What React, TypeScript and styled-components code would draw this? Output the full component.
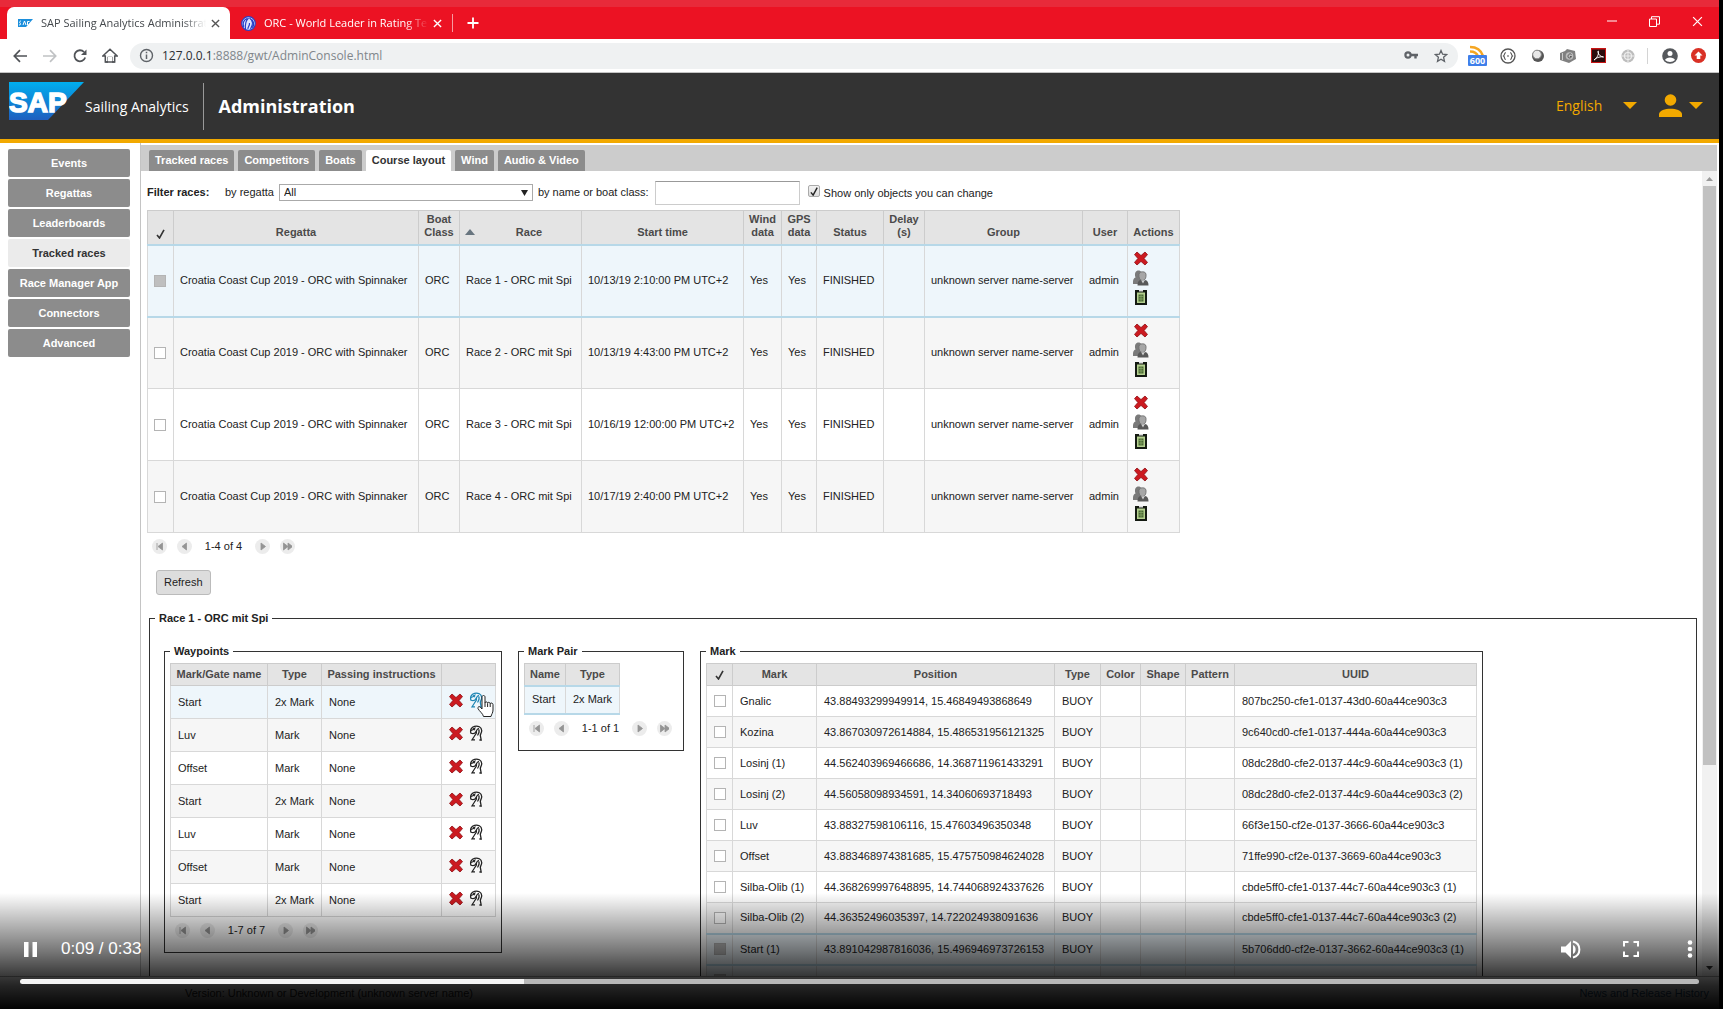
import React from "react";
import styled, { createGlobalStyle, css } from "styled-components";

const SANS = `"Liberation Sans", Arial, sans-serif`;
const UI = `"Open Sans", "Noto Sans", sans-serif`;

const GlobalStyle = createGlobalStyle`
  * { box-sizing: border-box; }
  body { margin: 0; background: #000; overflow: hidden; }
  button, input, select { font: inherit; color: inherit; margin: 0; }
  button { border: 0; padding: 0; background: none; cursor: pointer; }
  svg { display: block; flex: none; }
`;

const Screen = styled.div`
  position: relative;
  display: flex;
  flex-direction: column;
  height: 100vh;
  padding-right: 4px;
  background: #000;
  color: #222;
  font: 11px/13px ${SANS};
`;

/* ---------- browser window ---------- */

const TabStrip = styled.div`
  display: flex;
  height: 39px;
  padding-left: 7px;
  background: #ec1223;
  border-top: 7px solid #e82a3a;
  font: 11px/16px ${UI};
`;

const BrowserTab = styled.div<{ $active?: boolean }>`
  display: flex;
  align-items: center;
  width: ${(p) => (p.$active ? 223 : 222)}px;
  padding: 0 10px 0 11px;
  border-radius: 7px 7px 0 0;
  color: ${(p) => (p.$active ? "#45494d" : "#fff")};
  background: ${(p) => (p.$active ? "#fff" : "transparent")};
`;

const TabTitle = styled.span`
  flex: 1;
  min-width: 0;
  margin: 0 2px 0 8px;
  white-space: nowrap;
  mask-image: linear-gradient(90deg, #000 85%, transparent 99%);
`;

const TabDivider = styled.span`
  width: 1px;
  height: 18px;
  margin: 7px 14px 0 0;
  background: #f79aa0;
`;

const IconButton = styled.button<{ $w?: number }>`
  display: flex;
  align-items: center;
  justify-content: center;
  flex: none;
  width: ${(p) => p.$w ?? 30}px;
`;

const WindowButtons = styled.div`
  display: flex;
  margin-left: auto;
  padding-bottom: 4px;
`;

const Toolbar = styled.div`
  display: flex;
  align-items: center;
  height: 34px;
  padding: 0 6px 0 5px;
  background: #fff;
  border-bottom: 1px solid #c4c4c4;
`;

const AddressBar = styled.div`
  display: flex;
  flex: 1;
  align-items: center;
  height: 26px;
  margin: 0 5px;
  padding: 0 2px 0 9px;
  border-radius: 13px;
  background: #eff1f2;
  color: #80868b;
  font: 12px/18px ${UI};
  white-space: nowrap;
`;

const Url = styled.span`
  flex: 1;
  padding-left: 8px;
  b { font-weight: 400; color: #2b2f33; }
`;

const ToolbarDivider = styled.span`
  width: 1px;
  height: 16px;
  margin: 0 7px 0 4px;
  background: #d4d4d4;
`;

/* ---------- application header ---------- */

const AppHeader = styled.header`
  display: flex;
  align-items: center;
  flex: none;
  height: 70px;
  padding: 0 16px 0 9px;
  background: #333;
  border-bottom: 4px solid #f2a900;
  color: #fff;
  font: 14px/20px ${UI};
`;

const LogoImage = styled.svg`
  align-self: flex-start;
  margin-top: 9px;
`;

const Brand = styled.span`
  padding: 2px 14px 0 1px;
`;

const Title = styled.h1`
  margin: 0;
  padding: 0 0 0 15px;
  border-left: 1px solid #999;
  font-size: 18px;
  line-height: 47px;
  font-weight: 700;
`;

const HeaderTools = styled.div`
  display: flex;
  align-items: center;
  margin-left: auto;
  color: #f2a900;
`;

const Language = styled.label`
  display: flex;
  align-items: center;
  margin-right: 22px;
  select {
    width: 67px;
    padding: 0;
    border: 0;
    appearance: none;
    background: none;
  }
`;

const UserButton = styled.button`
  display: flex;
  align-items: center;
  gap: 7px;
`;

/* ---------- page body ---------- */

const Page = styled.div`
  display: flex;
  flex: 1;
  min-height: 0;
  background: #fff;
`;

const SideNav = styled.nav`
  display: flex;
  flex-direction: column;
  flex: none;
  gap: 2px;
  width: 141px;
  padding: 6px 10px 0 8px;
  border-right: 1px solid #c4c4c4;
`;

const SideItem = styled.button<{ $active?: boolean }>`
  height: 28px;
  border-radius: 2px;
  font-weight: 700;
  color: ${(p) => (p.$active ? "#333" : "#fff")};
  background: ${(p) => (p.$active ? "#ebebeb" : "#8c8c8c")};
`;

const Main = styled.main`
  display: flex;
  flex-direction: column;
  flex: 1;
  min-width: 0;
  padding: 2px 2px 0 0;
`;

const Tabs = styled.div`
  display: flex;
  align-items: flex-end;
  flex: none;
  gap: 4px;
  height: 26px;
  padding-left: 8px;
  background: #ccc;
`;

const Tab = styled.button<{ $active?: boolean }>`
  height: 21px;
  padding: 0 6px;
  border-radius: 2px 2px 0 0;
  font-weight: 700;
  white-space: nowrap;
  color: ${(p) => (p.$active ? "#333" : "#fff")};
  background: ${(p) => (p.$active ? "#fff" : "#8c8c8c")};
`;

const ScrollArea = styled.div`
  display: flex;
  flex: 1;
  min-height: 0;
`;

const Panel = styled.div`
  flex: 1;
  min-width: 0;
  padding: 0 5px 0 6px;
  overflow: hidden;
`;

const ScrollTrack = styled.div`
  display: flex;
  flex-direction: column;
  align-items: center;
  width: 15px;
  padding: 6px 0;
  background: #f1f1f1;
`;

const ScrollThumb = styled.div`
  width: 13px;
  height: 73%;
  margin: 5px 0 auto;
  background: #c1c1c1;
`;

const Filters = styled.form`
  display: flex;
  align-items: center;
  height: 39px;
  padding-top: 4px;
  white-space: nowrap;
`;

const FilterTitle = styled.strong`
  width: 78px;
`;

const RegattaSelect = styled.div`
  position: relative;
  width: 254px;
  margin: 0 5px;
  select {
    display: block;
    width: 100%;
    height: 17px;
    padding: 0 4px;
    border: 1px solid #aaa;
    border-radius: 0;
    appearance: none;
    background: #fff;
  }
  svg { position: absolute; right: 5px; top: 6px; pointer-events: none; }
`;

const NameInput = styled.input`
  width: 145px;
  height: 24px;
  margin: 0 8px 0 6px;
  border: 1px solid #ccc;
  border-top-color: #999;
`;

const TickLabel = styled.label`
  display: flex;
  align-items: flex-end;
  gap: 4px;
`;

const TickBox = styled.span`
  position: relative;
  display: flex;
  padding-bottom: 3px;
  input {
    width: 12px;
    height: 12px;
    appearance: none;
    border: 1px solid #aaa;
    border-radius: 2px;
    background: linear-gradient(#f2f2f2, #ddd);
  }
  svg { position: absolute; left: 2px; top: 2px; pointer-events: none; }
`;

/* ---------- tables ---------- */

const Grid = styled.table<{ $row: number; $head: number; $pad?: number }>`
  width: min-content;
  border-collapse: collapse;
  table-layout: fixed;
  white-space: nowrap;

  th {
    height: ${(p) => p.$head}px;
    padding: 0 2px;
    border: 1px solid #ccc;
    background: #e4e4e4;
    color: #4b4a4a;
    font-weight: 700;
    text-align: center;
  }
  th > svg { margin: 0 auto; }
  td {
    height: ${(p) => p.$row}px;
    padding: 0 0 0 ${(p) => p.$pad ?? 7}px;
    border: 1px solid #d8d8d8;
  }
`;

const RacesGrid = styled(Grid)`
  th {
    padding-bottom: 5px;
    vertical-align: bottom;
    white-space: pre-line;
  }
`;

const Row = styled.tr<{ $tone: "plain" | "even" | "selected" | "hover" }>`
  background: ${(p) => ({ plain: "#fff", even: "#f6f6f6", selected: "#eef6fb", hover: "#eef6fb" })[p.$tone]};
  ${(p) =>
    p.$tone === "selected" &&
    css`
      td { border-top: 2px solid #b7d8e8; border-bottom: 2px solid #b7d8e8; }
    `}
`;

const Check = styled.input<{ $pressed?: boolean }>`
  display: block;
  width: 12px;
  height: 12px;
  appearance: none;
  border: 1px solid #b4b4b4;
  background: ${(p) => (p.$pressed ? "#bfbfbf" : "#fff")};
`;

const SortHead = styled.span`
  display: grid;
  grid-template-columns: 14px 1fr;
  align-items: center;
  padding-left: 3px;
`;

const ActionStack = styled.div`
  display: flex;
  flex-direction: column;
  gap: 4px;
  padding-bottom: 6px;
`;

const ActionLine = styled.div`
  position: relative;
  display: flex;
  gap: 4px;
  padding-bottom: 4px;
`;

const Pointer = styled.svg`
  position: absolute;
  left: 28px;
  top: 2px;
`;

const PagerBar = styled.div`
  display: flex;
  align-items: center;
  gap: 10px;
  padding: 6px 6px 0 5px;
  span { width: 43px; text-align: center; white-space: nowrap; }
`;

const PagerButton = styled.button`
  display: flex;
  align-items: center;
  justify-content: center;
  width: 15px;
  height: 15px;
  border-radius: 8px;
  background: #ececec;
`;

const Refresh = styled.button`
  display: block;
  height: 25px;
  margin: 16px 9px;
  padding: 0 7px;
  border: 1px solid #bbb;
  border-radius: 3px;
  background: #ddd;
`;

const Group = styled.fieldset`
  flex: none;
  min-width: 0;
  margin: 0;
  padding: 5px 5px 14px;
  border: 1px solid #333;
`;

const RaceGroup = styled(Group)`
  margin-left: 2px;
  padding-top: 19px;
`;

const Legend = styled.legend`
  height: 14px;
  padding: 0 4px;
  line-height: 14px;
  font-weight: 700;
`;

const Groups = styled.div`
  display: flex;
  align-items: flex-start;
  gap: 16px;
  padding-left: 9px;
`;

const Footer = styled.footer`
  display: flex;
  justify-content: space-between;
  flex: none;
  height: 33px;
  padding: 9px 10px 0 185px;
  background: #fff;
  border-top: 1px solid #aaa;
  line-height: 14px;
  a { color: #1a4f7a; text-decoration: none; }
`;

/* ---------- video controls ---------- */

const Controls = styled.div`
  position: absolute;
  inset: auto 4px 0 0;
  display: flex;
  flex-direction: column;
  justify-content: flex-end;
  height: 116px;
  padding-bottom: 25px;
  color: #fff;
  background: linear-gradient(
    rgba(0, 0, 0, 0) 0%, rgba(0, 0, 0, 0.28) 26%, rgba(0, 0, 0, 0.54) 51%,
    rgba(0, 0, 0, 0.76) 70%, rgba(0, 0, 0, 0.86) 80%, rgba(0, 0, 0, 0.99) 100%
  );
`;

const ControlRow = styled.div`
  display: flex;
  align-items: center;
  height: 30px;
  margin-bottom: 15px;
  padding-left: 19px;
  font: 17px/20px ${SANS};
`;

const TimeText = styled.span`
  margin: 0 auto 0 20px;
`;

const SeekRow = styled.div`
  display: flex;
  padding: 0 20px;
`;

const Seek = styled.input<{ $played: number }>`
  display: block;
  width: 100%;
  height: 5px;
  border-radius: 3px;
  appearance: none;
  background: linear-gradient(90deg, #f4f4f4 ${(p) => p.$played}%, #b8b8b8 ${(p) => p.$played}%);
  &::-webkit-slider-thumb { appearance: none; width: 0; height: 0; }
`;

/* ---------- drawings ---------- */

const stroke = (color: string, width = 1.5) => ({ fill: "none", stroke: color, strokeWidth: width });

const SapMini = () => (
  <svg width="15" height="8" viewBox="0 0 15 8">
    <path d="M0 0h15l-7 8H0z" fill="#1c8fdc" />
    <path d="M1 6c2 0 2-1 1-2s0-2 1-2M5 6l1.500-4L8 6M9.500 6V2.500h2" {...stroke("#fff", 1)} />
  </svg>
);

const OrcMini = () => (
  <svg width="15" height="15" viewBox="0 0 15 15">
    <circle cx="7.500" cy="7.500" r="6.800" fill="#dfe4ff" stroke="#2740c8" strokeWidth="1.200" />
    <path d="M2.500 11C1.500 7 3 4 6 2.500M4.500 13C4 9 4.500 5 7.500 2M7 13c-.5-2 2-3 1.500-6M8.500 2c3 2 4 6 1 11M11 3.500c2 3 2 6 .5 8.500" {...stroke("#2740c8", 1.200)} />
  </svg>
);

const Cross = ({ color, size = 9, w = 1.5 }: { color: string; size?: number; w?: number }) => (
  <svg width={size} height={size} viewBox="0 0 10 10"><path d="M1 1l8 8M9 1l-8 8" {...stroke(color, w)} /></svg>
);

const SapLogo = () => (
  <LogoImage width="75" height="38" viewBox="0 0 75 38" role="img" aria-label="SAP">
    <defs>
      <linearGradient id="sap" x1="0" y1="0" x2="0" y2="1">
        <stop offset="0" stopColor="#00aeef" /><stop offset="1" stopColor="#1e5fbf" />
      </linearGradient>
    </defs>
    <path d="M0 0h75L39 38H0z" fill="url(#sap)" />
    <text x="0" y="30" fill="#fff" stroke="#fff" strokeWidth="1.500" fontFamily="Liberation Sans, Arial, sans-serif" fontSize="28" fontWeight="700">SAP</text>
  </LogoImage>
);

const Caret = () => <svg width="14" height="8" viewBox="0 0 14 8"><path d="M0 0h14L7 7z" fill="#f2a900" /></svg>;

const DeleteIcon = () => (
  <svg width="14" height="15" viewBox="0 0 14 15">
    <path d="M3 1l4 3.600L11 1l2.500 2.600-3.400 3.900 3.400 3.900L11 14l-4-3.600L3 14 .5 11.400l3.400-3.900L.5 3.600z" fill="#cc1a20" stroke="#8e0f14" strokeWidth=".8" strokeLinejoin="round" />
  </svg>
);

const OwnersIcon = () => (
  <svg width="16" height="16" viewBox="0 0 16 16">
    <path d="M0 13c0-4 1-5 2.500-5.500C1 3 3 .5 5.500.5S9.500 3 9 6l-1 8H0z" fill="#7a7a7a" />
    <path d="M6 6.500C5.500 3 7 1.800 9.500 1.800S13.500 3 13 6.500c-.3 2.500-1.500 4-3.500 4S6.300 9 6 6.500z" fill="#a6a6a6" stroke="#6a6a6a" strokeWidth=".8" />
    <path d="M4.500 15.500c0-3.500 1-5 3-5.500l2.500 2.500L12 10c2.500.5 3.500 2 3.500 5.500z" fill="#585858" />
    <path d="M8.500 10.500l1.500 3 1.500-3z" fill="#ccc" />
  </svg>
);

const ClipboardIcon = () => (
  <svg width="12" height="15" viewBox="0 0 12 15">
    <path d="M0 0h12v15H0z" fill="#141a12" /><path d="M2 2.500h8V13H2z" fill="#b4d08f" />
    <path d="M3.500 4.500h5v7h-5z" fill="#4c6b35" /><path d="M3.500 6.500h5M3.500 9h5M6 4.500v7" {...stroke("#94b374", 0.6)} />
    <path d="M4 0h4v1.500H4z" fill="#ddd" />
  </svg>
);

const OrcIcon = ({ color = "#222" }: { color?: string }) => (
  <svg width="14" height="16" viewBox="0 0 14 16">
    <path d="M2 8.500C.8 5 2.500 2 5.500 1.300 9 .5 12.500 2 12.700 5.500c.1 2-1.200 3-1.400 5l.9 4.500h-1.800" {...stroke(color, 1.300)} />
    <path d="M2 5.500c2-.3 3.500-1.500 4.500-3M2 8.200c2 .8 4 .2 5-1.800s1.500-2.800 3-3M7.500 6.500c.5 2-1 3-2 4.500L3 14.800h3M9.800 4.500c.8 2 .2 4-1.300 6M4 3.500l2 1.500" {...stroke(color, 1.200)} />
  </svg>
);

const CheckMark = ({ color = "#333", size = 10 }: { color?: string; size?: number }) => (
  <svg width={size} height={size} viewBox="0 0 10 10"><path d="M1 6l2.500 3L8 .8" {...stroke(color, 1.600)} /></svg>
);

/* ---------- shared parts ---------- */

const pagerShapes = {
  "First page": "M2 1v7M7.500 1L3 4.500 7.500 8z",
  "Previous page": "M6.500 1L2 4.500 6.500 8z",
  "Next page": "M3 1l4.500 3.500L3 8z",
  "Fast forward": "M0.500 1L5 4.500 0.500 8zM5 1l4.500 3.500L5 8z",
};

const PageStep = ({ name }: { name: keyof typeof pagerShapes }) => (
  <PagerButton type="button" aria-label={name}>
    <svg width="9" height="9" viewBox="0 0 9 9"><path d={pagerShapes[name]} fill="#949494" stroke="#949494" strokeWidth=".8" /></svg>
  </PagerButton>
);

const Pager = ({ text }: { text: string }) => (
  <PagerBar>
    <PageStep name="First page" />
    <PageStep name="Previous page" />
    <span>{text}</span>
    <PageStep name="Next page" />
    <PageStep name="Fast forward" />
  </PagerBar>
);

const Cols = ({ widths }: { widths: number[] }) => (
  <colgroup>{widths.map((w, i) => <col key={i} width={w} />)}</colgroup>
);

/* ---------- data ---------- */

const sections = ["Events", "Regattas", "Leaderboards", "Tracked races", "Race Manager App", "Connectors", "Advanced"];
const tabs = ["Tracked races", "Competitors", "Boats", "Course layout", "Wind", "Audio & Video"];
const races = [
  ["Race 1 - ORC mit Spi", "10/13/19 2:10:00 PM UTC+2"],
  ["Race 2 - ORC mit Spi", "10/13/19 4:43:00 PM UTC+2"],
  ["Race 3 - ORC mit Spi", "10/16/19 12:00:00 PM UTC+2"],
  ["Race 4 - ORC mit Spi", "10/17/19 2:40:00 PM UTC+2"],
];
const waypoints = [
  ["Start", "2x Mark"], ["Luv", "Mark"], ["Offset", "Mark"], ["Start", "2x Mark"],
  ["Luv", "Mark"], ["Offset", "Mark"], ["Start", "2x Mark"],
];
const marks = [
  ["Gnalic", "43.88493299949914, 15.46849493868649", "807bc250-cfe1-0137-43d0-60a44ce903c3"],
  ["Kozina", "43.867030972614884, 15.486531956121325", "9c640cd0-cfe1-0137-444a-60a44ce903c3"],
  ["Losinj (1)", "44.562403969466686, 14.368711961433291", "08dc28d0-cfe2-0137-44c9-60a44ce903c3 (1)"],
  ["Losinj (2)", "44.56058098934591, 14.34060693718493", "08dc28d0-cfe2-0137-44c9-60a44ce903c3 (2)"],
  ["Luv", "43.88327598106116, 15.47603496350348", "66f3e150-cf2e-0137-3666-60a44ce903c3"],
  ["Offset", "43.883468974381685, 15.475750984624028", "71ffe990-cf2e-0137-3669-60a44ce903c3"],
  ["Silba-Olib (1)", "44.368269997648895, 14.744068924337626", "cbde5ff0-cfe1-0137-44c7-60a44ce903c3 (1)"],
  ["Silba-Olib (2)", "44.36352496035397, 14.722024938091636", "cbde5ff0-cfe1-0137-44c7-60a44ce903c3 (2)"],
  ["Start (1)", "43.891042987816036, 15.496946973726153", "5b706dd0-cf2e-0137-3662-60a44ce903c3 (1)"],
  ["Start (2)", "43.89677388938183, 15.492682831844728", "5b706dd0-cf2e-0137-3662-60a44ce903c3 (2)"],
];

/* ---------- sections ---------- */

const BrowserChrome = () => (
  <>
    <TabStrip>
      <BrowserTab $active>
        <SapMini />
        <TabTitle>SAP Sailing Analytics Administrat</TabTitle>
        <IconButton $w={10} aria-label="Close tab"><Cross color="#555" /></IconButton>
      </BrowserTab>
      <BrowserTab>
        <OrcMini />
        <TabTitle>ORC - World Leader in Rating Tec</TabTitle>
        <IconButton $w={10} aria-label="Close tab"><Cross color="#fff" /></IconButton>
      </BrowserTab>
      <TabDivider />
      <IconButton $w={12} aria-label="New tab">
        <svg width="12" height="12" viewBox="0 0 12 12"><path d="M6 .5v11M.5 6h11" {...stroke("#fff", 1.8)} /></svg>
      </IconButton>
      <WindowButtons>
        <IconButton $w={43} aria-label="Minimise"><svg width="10" height="2"><path d="M0 1h10" {...stroke("#fff", 1)} /></svg></IconButton>
        <IconButton $w={43} aria-label="Restore"><svg width="11" height="11" viewBox="0 0 11 11"><path d="M.5 3h7v7.500h-7zM2.500 3V.7h8v7.500h-3" {...stroke("#fff", 1)} /></svg></IconButton>
        <IconButton $w={43} aria-label="Close"><Cross color="#fff" size={11} w={1.1} /></IconButton>
      </WindowButtons>
    </TabStrip>
    <Toolbar>
      <IconButton aria-label="Back"><svg width="14" height="14" viewBox="0 0 14 14"><path d="M14 7H1.500M7 1.200L1.300 7 7 12.800" {...stroke("#505357", 1.7)} /></svg></IconButton>
      <IconButton aria-label="Forward"><svg width="14" height="14" viewBox="0 0 14 14"><path d="M0 7h12.500M7 1.200L12.700 7 7 12.800" {...stroke("#c0c2c4", 1.7)} /></svg></IconButton>
      <IconButton aria-label="Reload"><svg width="14" height="14" viewBox="0 0 14 14"><path d="M12.200 8.500A5.500 5.500 0 1 1 11 3" {...stroke("#505357", 1.8)} /><path d="M13.500.5v5.500H8z" fill="#505357" /></svg></IconButton>
      <IconButton aria-label="Home"><svg width="16" height="15" viewBox="0 0 16 15"><path d="M.8 8L8 1.200 15.200 8h-2.500v6H9.800V9.500H6.200V14H3.300V8z" {...stroke("#505357", 1.500)} /><path d="M6 9h4v6H6z" fill="#fff" /><path d="M3.300 14h9.400" {...stroke("#505357", 1.500)} /></svg></IconButton>
      <AddressBar>
        <svg width="15" height="15" viewBox="0 0 15 15"><circle cx="7.500" cy="7.500" r="6" {...stroke("#5f6368", 1.4)} /><path d="M7.500 6.500V11M7.500 3.800v1.500" {...stroke("#5f6368", 1.5)} /></svg>
        <Url><b>127.0.0.1</b>:8888/gwt/AdminConsole.html</Url>
        <IconButton aria-label="Saved passwords"><svg width="14" height="9" viewBox="0 0 14 9"><circle cx="4" cy="4" r="2.600" {...stroke("#5f6368", 2.2)} /><path d="M6.500 4H14M11.500 4v3.500" {...stroke("#5f6368", 2.4)} /></svg></IconButton>
        <IconButton aria-label="Bookmark"><svg width="14" height="14" viewBox="0 0 14 14"><path d="M7 1.500l1.600 3.700 4 .4-3 2.700.9 4L7 10.200l-3.500 2.100.9-4-3-2.700 4-.4z" {...stroke("#5f6368", 1.3)} /></svg></IconButton>
      </AddressBar>
      <IconButton aria-label="Feeds">
        <svg width="20" height="22" viewBox="0 0 20 22">
          <path d="M2 2c6 0 11 3 13 9M2 6.500c4 0 7 2 8 5" {...stroke("#f5a623", 2.6)} />
          <rect y="10" width="19" height="11" rx="1" fill="#3f7fea" />
          <text x="9.500" y="19" textAnchor="middle" fill="#fff" fontSize="9" fontWeight="700" fontFamily="Open Sans, sans-serif">600</text>
        </svg>
      </IconButton>
      <IconButton aria-label="Script tools"><svg width="16" height="16" viewBox="0 0 16 16"><circle cx="8" cy="8" r="7" {...stroke("#555", 1.3)} /><path d="M5.800 4.500C4 5 5 7 3.500 8 5 9 4 11 5.800 11.500M10.200 4.500C12 5 11 7 12.500 8 11 9 12 11 10.200 11.500M7 8h2" {...stroke("#555", 1.1)} /></svg></IconButton>
      <IconButton aria-label="Lens"><svg width="14" height="14" viewBox="0 0 14 14"><circle cx="7" cy="7" r="6" fill="#555" /><circle cx="6" cy="5.500" r="4.300" fill="#e8e8e8" stroke="#888" /></svg></IconButton>
      <IconButton aria-label="Capture"><svg width="16" height="14" viewBox="0 0 16 14"><path d="M0 4l5-2 2-2 4 1 4 1 1 8-7 4-9-3z" fill="#808080" /><circle cx="9.500" cy="7" r="3.800" fill="#bbb" /><path d="M11.500 5.500C10 4 8 5.500 8 7.500s3 2 3.500 0H10" {...stroke("#555", 1)} /><path d="M2.500 4v7" {...stroke("#ccc", 1)} /></svg></IconButton>
      <IconButton aria-label="PDF"><svg width="15" height="15" viewBox="0 0 15 15"><rect width="15" height="15" fill="#c81414" /><rect x="1" y="1.500" width="13" height="12.500" fill="#2a0c0c" /><path d="M3 12c2-1 5-5 4.500-8.500 0-1-1-.5-.5 1 .5 2 2 4 5.500 4.500C10 8.500 6 9 3 12z" {...stroke("#fff", 1)} /></svg></IconButton>
      <IconButton aria-label="Target"><svg width="14" height="14" viewBox="0 0 14 14"><circle cx="7" cy="7" r="6.500" fill="#bdbdbd" /><circle cx="7" cy="7" r="3.500" {...stroke("#eee", 1.2)} /><path d="M7 1v12M1 7h12" {...stroke("#eee", 1)} /></svg></IconButton>
      <ToolbarDivider />
      <IconButton $w={29} aria-label="Profile"><svg width="16" height="16" viewBox="0 0 16 16"><circle cx="8" cy="8" r="7.800" fill="#55585c" /><circle cx="8" cy="5.500" r="2.500" fill="#fff" /><path d="M3 12c1-3.500 9-3.500 10 0-2.500 2.500-7.500 2.500-10 0z" fill="#fff" /></svg></IconButton>
      <IconButton $w={29} aria-label="Update"><svg width="15" height="15" viewBox="0 0 15 15"><circle cx="7.500" cy="7.500" r="7.500" fill="#d93025" /><path d="M7.500 3.500l4 4H9.300V11H5.700V7.500H3.500z" fill="#fff" /></svg></IconButton>
    </Toolbar>
  </>
);

const RacesTable = () => (
  <RacesGrid $row={72} $head={34} $pad={6}>
    <Cols widths={[26, 245, 41, 122, 162, 38, 35, 67, 41, 158, 45, 52]} />
    <thead>
      <tr>
        <th aria-label="Select"><CheckMark /></th>
        <th>Regatta</th>
        <th>{"Boat\nClass"}</th>
        <th>
          <SortHead>
            <svg width="10" height="6" viewBox="0 0 10 6"><path d="M5 0l5 6H0z" fill="#68757f" /></svg>
            Race
          </SortHead>
        </th>
        <th>Start time</th>
        <th>{"Wind\ndata"}</th>
        <th>{"GPS\ndata"}</th>
        <th>Status</th>
        <th>{"Delay\n(s)"}</th>
        <th>Group</th>
        <th>User</th>
        <th>Actions</th>
      </tr>
    </thead>
    <tbody>
      {races.map(([race, time], i) => (
        <Row key={race} $tone={i === 0 ? "selected" : i % 2 ? "even" : "plain"}>
          <td><Check type="checkbox" aria-label={race} $pressed={i === 0} /></td>
          <td>Croatia Coast Cup 2019 - ORC with Spinnaker</td>
          <td>ORC</td>
          <td>{race}</td>
          <td>{time}</td>
          <td>Yes</td>
          <td>Yes</td>
          <td>FINISHED</td>
          <td />
          <td>unknown server name-server</td>
          <td>admin</td>
          <td>
            <ActionStack>
              <IconButton $w={14} aria-label="Remove"><DeleteIcon /></IconButton>
              <IconButton $w={14} aria-label="Ownership"><OwnersIcon /></IconButton>
              <IconButton $w={14} aria-label="Access list"><ClipboardIcon /></IconButton>
            </ActionStack>
          </td>
        </Row>
      ))}
    </tbody>
  </RacesGrid>
);

const WaypointsGroup = () => (
  <Group>
    <Legend>Waypoints</Legend>
    <Grid $row={33} $head={22}>
      <Cols widths={[97, 54, 120, 54]} />
      <thead>
        <tr><th>Mark/Gate name</th><th>Type</th><th>Passing instructions</th><th aria-label="Actions" /></tr>
      </thead>
      <tbody>
        {waypoints.map(([name, type], i) => (
          <Row key={i} $tone={i === 0 ? "hover" : i % 2 ? "even" : "plain"}>
            <td>{name}</td>
            <td>{type}</td>
            <td>None</td>
            <td>
              <ActionLine>
                <IconButton $w={14} aria-label="Remove"><DeleteIcon /></IconButton>
                <IconButton $w={17} aria-label="Fixed mark passing"><OrcIcon color={i === 0 ? "#1f86b4" : "#222"} /></IconButton>
                {i === 0 && (
                  <Pointer width="17" height="24" viewBox="0 0 17 24">
                    <path d="M5 15V3c0-2 3-2 3 0v6c0-1.500 2.600-1.500 2.600.3 0-1.500 2.600-1.200 2.600.5 0-1.300 2.800-1 2.800.8V16c0 3-1.500 4-2 6.500H6.500C6 19.500 2 17 1 14.500c-.6-1.800 1.500-2.500 2.600-1z" fill="#fff" stroke="#222" />
                    <path d="M8 9v4M10.600 9.500V13M13.200 10v3" {...stroke("#222", 1)} />
                  </Pointer>
                )}
              </ActionLine>
            </td>
          </Row>
        ))}
      </tbody>
    </Grid>
    <Pager text="1-7 of 7" />
  </Group>
);

const MarkPairGroup = () => (
  <Group>
    <Legend>Mark Pair</Legend>
    <Grid $row={28} $head={22}>
      <Cols widths={[41, 54]} />
      <thead><tr><th>Name</th><th>Type</th></tr></thead>
      <tbody><Row $tone="selected"><td>Start</td><td>2x Mark</td></Row></tbody>
    </Grid>
    <Pager text="1-1 of 1" />
  </Group>
);

const MarkGroup = () => (
  <Group>
    <Legend>Mark</Legend>
    <Grid $row={31} $head={22}>
      <Cols widths={[26, 84, 238, 46, 40, 45, 49, 242]} />
      <thead>
        <tr>
          <th aria-label="Select"><CheckMark /></th>
          <th>Mark</th><th>Position</th><th>Type</th><th>Color</th><th>Shape</th><th>Pattern</th><th>UUID</th>
        </tr>
      </thead>
      <tbody>
        {marks.map(([name, position, uuid], i) => (
          <Row key={uuid} $tone={i > 7 ? "selected" : i % 2 ? "even" : "plain"}>
            <td><Check type="checkbox" aria-label={name} $pressed={i > 7} /></td>
            <td>{name}</td>
            <td>{position}</td>
            <td>BUOY</td>
            <td /><td /><td />
            <td>{uuid}</td>
          </Row>
        ))}
      </tbody>
    </Grid>
  </Group>
);

const VideoControls = () => (
  <Controls>
    <ControlRow>
      <IconButton $w={22} aria-label="Pause"><svg width="13" height="15" viewBox="0 0 13 15"><path d="M0 0h4.500v15H0zM8.500 0H13v15H8.500z" fill="#fff" /></svg></IconButton>
      <TimeText>0:09 / 0:33</TimeText>
      <IconButton $w={60} aria-label="Mute"><svg width="20" height="19" viewBox="0 0 20 19"><path d="M0 6.500h4.500L10 1v17l-5.500-5.500H0z" fill="#fff" /><path d="M12 5v9c3.500-1.500 3.500-7.500 0-9z" fill="#fff" /><path d="M12 1.500c8.500 2 8.500 14 0 16" {...stroke("#fff", 2)} /></svg></IconButton>
      <IconButton $w={60} aria-label="Full screen"><svg width="16" height="16" viewBox="0 0 16 16"><path d="M1 5.500V1h4.500M10.500 1H15v4.500M15 10.500V15h-4.500M5.500 15H1v-4.500" {...stroke("#fff", 2)} /></svg></IconButton>
      <IconButton $w={58} aria-label="More options"><svg width="6" height="18" viewBox="0 0 6 18"><circle cx="3" cy="2.500" r="2.300" fill="#fff" /><circle cx="3" cy="9" r="2.300" fill="#fff" /><circle cx="3" cy="15.500" r="2.300" fill="#fff" /></svg></IconButton>
    </ControlRow>
    <SeekRow>
      <Seek type="range" aria-label="Seek" min={0} max={100} defaultValue={30} $played={30} />
    </SeekRow>
  </Controls>
);

export default function App() {
  return (
    <Screen>
      <GlobalStyle />
      <BrowserChrome />
      <AppHeader>
        <SapLogo />
        <Brand>Sailing Analytics</Brand>
        <Title>Administration</Title>
        <HeaderTools>
          <Language>
            <select aria-label="Language"><option>English</option></select>
            <Caret />
          </Language>
          <UserButton aria-label="User menu">
            <svg width="23" height="24" viewBox="0 0 23 24"><circle cx="11.500" cy="6" r="5.800" fill="#f2a900" /><path d="M0 23v-3c1-7 22-7 23 0v3z" fill="#f2a900" /></svg>
            <Caret />
          </UserButton>
        </HeaderTools>
      </AppHeader>
      <Page>
        <SideNav>
          {sections.map((s) => <SideItem key={s} $active={s === "Tracked races"}>{s}</SideItem>)}
        </SideNav>
        <Main>
          <Tabs role="tablist">
            {tabs.map((t) => <Tab key={t} role="tab" aria-selected={t === "Course layout"} $active={t === "Course layout"}>{t}</Tab>)}
          </Tabs>
          <ScrollArea>
            <Panel>
              <Filters>
                <FilterTitle>Filter races:</FilterTitle>
                <label htmlFor="regatta">by regatta</label>
                <RegattaSelect>
                  <select id="regatta"><option>All</option></select>
                  <svg width="7" height="6" viewBox="0 0 7 6"><path d="M0 0h7L3.500 6z" fill="#222" /></svg>
                </RegattaSelect>
                <label htmlFor="name">by name or boat class:</label>
                <NameInput id="name" type="text" />
                <TickLabel>
                  <TickBox><input type="checkbox" defaultChecked /><CheckMark size={9} color="#222" /></TickBox>
                  Show only objects you can change
                </TickLabel>
              </Filters>
              <RacesTable />
              <Pager text="1-4 of 4" />
              <Refresh type="button">Refresh</Refresh>
              <RaceGroup>
                <Legend>Race 1 - ORC mit Spi</Legend>
                <Groups>
                  <WaypointsGroup />
                  <MarkPairGroup />
                  <MarkGroup />
                </Groups>
              </RaceGroup>
            </Panel>
            <ScrollTrack>
              <svg width="7" height="4" viewBox="0 0 7 4"><path d="M3.500 0L7 4H0z" fill="#999" /></svg>
              <ScrollThumb />
              <svg width="7" height="4" viewBox="0 0 7 4"><path d="M0 0h7L3.500 4z" fill="#333" /></svg>
            </ScrollTrack>
          </ScrollArea>
        </Main>
      </Page>
      <Footer>
        <span>Version: Unknown or Development (unknown server name)</span>
        <a href="#news">News and Release History</a>
      </Footer>
      <VideoControls />
    </Screen>
  );
}
